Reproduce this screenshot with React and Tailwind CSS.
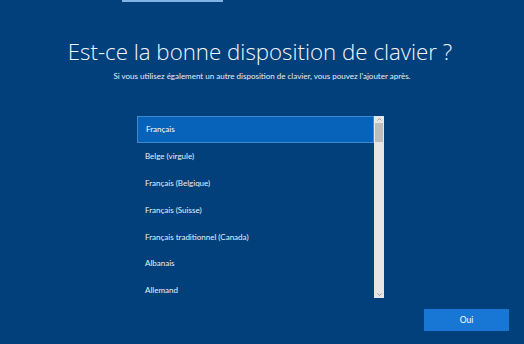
import React, { useState } from "react";

const layouts = [
  "Français",
  "Belge (virgule)",
  "Français (Belgique)",
  "Français (Suisse)",
  "Français traditionnel (Canada)",
  "Albanais",
  "Allemand",
];

const App = () => {
  const [selected, setSelected] = useState(0);

  return (
    <div
      className="w-[524px] h-[344px] bg-[#02407c] text-white flex flex-col overflow-hidden"
      style={{ fontFamily: 'Lato, "Liberation Sans", sans-serif' }}
    >
      {/* progress indicator */}
      <div className="flex h-[2px]">
        <div className="w-[122px]" />
        <div className="w-[101px] bg-[#7fb2e5]" />
      </div>

      <h1
        className="mt-[35px] pr-[4px] text-center text-[22.3px] leading-[30px] font-light text-[#f2f6fb]"
        style={{ fontFamily: '"Open Sans", "Liberation Sans", sans-serif' }}
      >
        Est-ce la bonne disposition de clavier ?
      </h1>
      <p className="mt-[4px] text-center text-[8px] leading-[10px] text-[#e6eef7]">
        Si vous utilisez également un autre disposition de clavier, vous pouvez l'ajouter après.
      </p>

      <div className="mt-[35px] ml-[137px] w-[247px] h-[182px] flex">
        <ul className="flex-1 flex flex-col">
          {layouts.map((name, i) => (
            <li
              key={name}
              onClick={() => setSelected(i)}
              className={
                "h-[26.8px] shrink-0 flex items-center pl-[8px] text-[8px] cursor-default " +
                (i === selected
                  ? "bg-[#0663b9] border border-[#3f87cf] pl-[7px]"
                  : "text-[#e9f0f8]")
              }
            >
              {name}
            </li>
          ))}
        </ul>
        <div className="w-[10px] bg-[#e6e6e6] flex flex-col items-center">
          <div className="h-[7px] flex items-center text-[#8a8a8a]">
            <svg width="5" height="3" viewBox="0 0 5 3">
              <path d="M0.5 2.5 L2.5 0.5 L4.5 2.5" stroke="currentColor" fill="none" strokeWidth="0.8" />
            </svg>
          </div>
          <div className="w-[8px] h-[19px] bg-[#bdbdbd]" />
          <div className="flex-1" />
          <div className="h-[7px] flex items-center text-[#8a8a8a]">
            <svg width="5" height="3" viewBox="0 0 5 3">
              <path d="M0.5 0.5 L2.5 2.5 L4.5 0.5" stroke="currentColor" fill="none" strokeWidth="0.8" />
            </svg>
          </div>
        </div>
      </div>

      <div className="flex justify-end mt-[11px] pr-[15px]">
        <button className="w-[85px] h-[22px] bg-[#1877d5] text-[8.5px] text-white">
          Oui
        </button>
      </div>
    </div>
  );
};

export default App;
